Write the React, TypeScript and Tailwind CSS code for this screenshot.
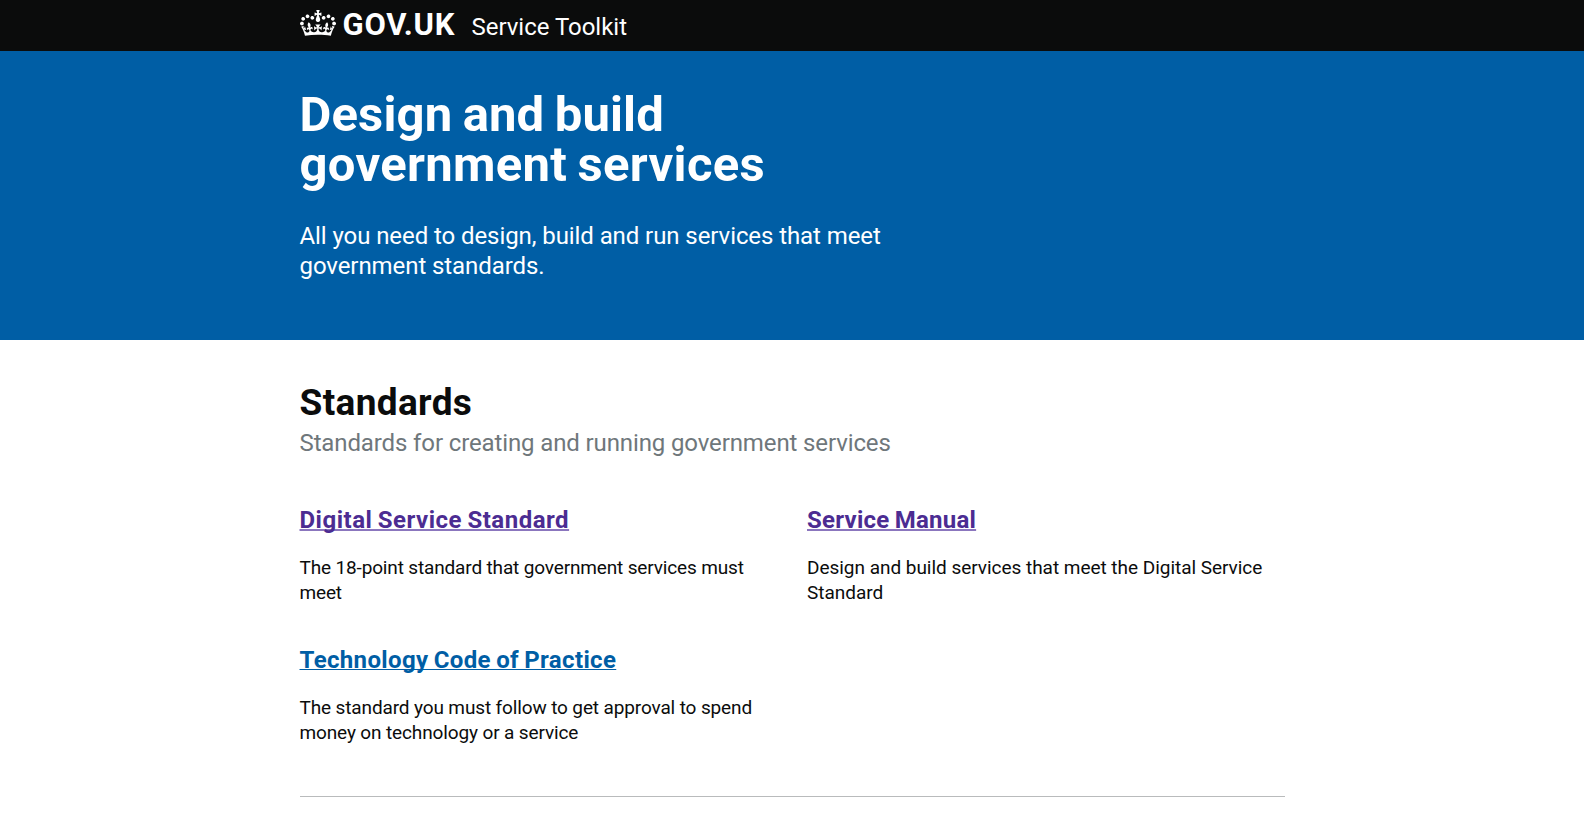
const CROWN =
  "M25 30.2c3.5 1.5 7.7-.2 9.1-3.7 1.5-3.6-.2-7.8-3.9-9.2-3.6-1.4-7.6.3-9.1 3.9-1.4 3.5.3 7.5 3.9 9zM9 39.5c3.6 1.5 7.8-.2 9.2-3.7 1.5-3.6-.2-7.8-3.9-9.1-3.6-1.5-7.6.2-9.1 3.8-1.4 3.5.3 7.5 3.8 9zM4.4 57.2c3.5 1.5 7.7-.2 9.1-3.8 1.5-3.6-.2-7.7-3.9-9.1-3.5-1.5-7.6.3-9.1 3.8-1.4 3.5.3 7.6 3.9 9.1zm38.3-21.4c3.5 1.5 7.7-.2 9.1-3.8 1.5-3.6-.2-7.7-3.9-9.1-3.6-1.5-7.6.3-9.1 3.8-1.3 3.6.4 7.7 3.9 9.1zm64.4-5.6c-3.6 1.5-7.8-.2-9.1-3.7-1.5-3.6.2-7.8 3.8-9.2 3.6-1.4 7.7.3 9.2 3.9 1.3 3.5-.4 7.5-3.9 9zm15.9 9.3c-3.6 1.5-7.7-.2-9.1-3.7-1.5-3.6.2-7.8 3.7-9.1 3.6-1.5 7.7.2 9.2 3.8 1.5 3.5-.3 7.5-3.8 9zm4.7 17.7c-3.6 1.5-7.8-.2-9.2-3.8-1.5-3.6.2-7.7 3.9-9.1 3.6-1.5 7.7.3 9.2 3.8 1.3 3.5-.4 7.6-3.9 9.1zM89.3 35.8c-3.6 1.5-7.8-.2-9.2-3.8-1.4-3.6.2-7.7 3.9-9.1 3.6-1.5 7.7.3 9.2 3.8 1.4 3.6-.3 7.7-3.9 9.1zM69.7 17.7l8.9 4.7V9.3l-8.9 2.8c-.2-.3-.5-.6-.9-.9L72.4 0H59.6l3.5 11.2c-.3.3-.6.5-.9.9l-8.8-2.8v13.1l8.8-4.7c.3.3.6.7.9.9l-5 15.4v.1c-.2.8-.4 1.6-.4 2.4 0 4.1 3.1 7.5 7 8.1h.2c.3 0 .7.1 1 .1.4 0 .7 0 1-.1h.2c4-.6 7.1-4.1 7.1-8.1 0-.8-.1-1.7-.4-2.4V34l-5.1-15.4c.4-.2.7-.6 1-.9zM66 92.8c16.9 0 32.8 1.1 47.1 3.2 4-16.9 8.9-26.7 14-33.5l-9.6-3.4c1 4.9 1.1 7.2 0 10.2-1.5-1.4-3-4.3-4.2-8.7L108.6 76c2.8-2 5-3.2 7.5-3.3-4.4 9.4-10 11.9-13.6 11.2-4.3-.8-6.3-4.6-5.6-7.9 1-4.7 5.7-5.9 8-.5 4.3-8.7-3-11.4-7.6-8.8 7.1-7.2 7.9-13.5 2.1-21.1-8 6.1-8.1 12.3-4.5 20.8-4.7-5.4-12.1-2.5-9.5 6.2 3.4-5.2 7.9-2 7.2 3.1-.6 4.3-6.4 7.8-13.5 7.2-10.3-.9-10.9-8-11.2-13.8 2.5-.5 7.1 1.8 11 7.3L80.2 60c-4.1 4.4-8 5.3-12.3 5.4 1.4-4.4 8-11.6 8-11.6H55.5s6.4 7.2 7.9 11.6c-4.2-.1-8-1-12.3-5.4l1.4 16.4c3.9-5.5 8.5-7.7 10.9-7.3-.3 5.8-.9 12.8-11.1 13.8-7.2.6-12.9-2.9-13.5-7.2-.7-5 3.8-8.3 7.1-3.1 2.7-8.7-4.6-11.6-9.4-6.2 3.7-8.5 3.6-14.7-4.6-20.8-5.8 7.6-5 13.9 2.2 21.1-4.7-2.6-11.9.1-7.7 8.8 2.3-5.5 7.1-4.2 8.1.5.7 3.3-1.3 7.1-5.7 7.9-3.5.7-9-1.8-13.5-11.2 2.5.1 4.7 1.3 7.5 3.3l-4.7-15.4c-1.2 4.4-2.7 7.2-4.3 8.7-1.1-3-.9-5.3 0-10.2l-9.5 3.4c5 6.9 9.9 16.7 14 33.5 14.8-2.1 30.8-3.2 47.7-3.2z";

const WRAP = "mx-auto w-[985px]";

type Item = { title: string; text: string; visited?: boolean; titleTracking: string; textTracking: string };

const items: Item[] = [
  {
    title: "Digital Service Standard",
    text: "The 18-point standard that government services must meet",
    visited: true,
    titleTracking: "tracking-[0.5px]",
    textTracking: "tracking-[-0.15px]",
  },
  {
    title: "Service Manual",
    text: "Design and build services that meet the Digital Service Standard",
    visited: true,
    titleTracking: "tracking-[0.25px]",
    textTracking: "tracking-[-0.03px]",
  },
  {
    title: "Technology Code of Practice",
    text: "The standard you must follow to get approval to spend money on technology or a service",
    titleTracking: "tracking-[0.35px]",
    textTracking: "tracking-[-0.13px]",
  },
];

function Header() {
  return (
    <header className="h-[51px] bg-[#0b0c0c] text-white">
      <div className={`${WRAP} flex items-start`}>
        <a href="#" className="flex items-start">
          <svg viewBox="0 0 132 97" className="mt-[10px] h-[26px] w-[36px]" preserveAspectRatio="none" fill="currentColor" aria-hidden="true">
            <path d={CROWN} />
          </svg>
          <span className="ml-[7px] mt-[10px] w-[129px] text-[31px] leading-[30px] font-bold tracking-[0.75px]">GOV.UK</span>
        </a>
        <a href="#" className="mt-[12px] text-[24px] leading-[30px] tracking-[-0.02px]">
          Service Toolkit
        </a>
      </div>
    </header>
  );
}

function Hero() {
  return (
    <section className="h-[289px] bg-[#005ea5] pt-[39px] text-white">
      <div className={WRAP}>
        <h1 className="w-[620px] text-[49px] leading-[50px] font-bold">
          <span className="block tracking-[0.15px] [word-spacing:-2px]">Design and build</span>
          <span className="block tracking-[0.3px] [word-spacing:-2px]">government services</span>
        </h1>
        <p className="mt-[32px] w-[620px] text-[24px] leading-[29.5px] tracking-[-0.08px]">
          All you need to design, build and run services that meet government standards.
        </p>
      </div>
    </section>
  );
}

function Card({ item }: { item: Item }) {
  return (
    <article className="h-[140px]">
      <h3 className={`text-[24px] leading-[30px] font-bold [word-spacing:-1px] ${item.titleTracking}`}>
        <a
          href="#"
          className={`underline underline-offset-[1px] [text-decoration-skip-ink:none] ${
            item.visited ? "text-[#4c2c92] decoration-[#8b76be] decoration-2" : "text-[#005ea5] decoration-1"
          }`}
        >
          {item.title}
        </a>
      </h3>
      <p className={`mt-[21px] w-[470px] text-[19px] leading-[24.5px] ${item.textTracking}`}>{item.text}</p>
    </article>
  );
}

export default function App() {
  return (
    <div className="h-[819px] overflow-hidden bg-white font-[Roboto,'Liberation_Sans',sans-serif] text-[#0b0c0c]">
      <Header />
      <Hero />
      <main className={`${WRAP} pt-[43px]`}>
        <h2 className="text-[37px] leading-[40px] font-bold tracking-[0.35px]">Standards</h2>
        <p className="mt-[5px] text-[24px] leading-[30px] tracking-[-0.12px] text-[#6f777b]">
          Standards for creating and running government services
        </p>
        <div className="mt-[47px] grid grid-cols-[507.5px_1fr]">
          {items.map((item) => (
            <Card key={item.title} item={item} />
          ))}
        </div>
        <hr className="mt-[11px] border-t border-[#b9bbbc]" />
      </main>
    </div>
  );
}
